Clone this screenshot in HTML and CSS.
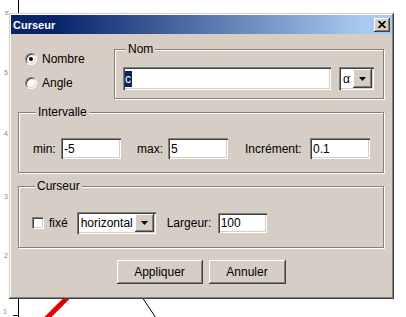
FILE: index.html
```html
<!DOCTYPE html>
<html lang="fr">
<head>
  <meta charset="UTF-8">
  <title>Curseur</title>
  <meta name="viewport" content="width=device-width, initial-scale=1.0">
  <link rel="stylesheet" href="styles.css">
</head>
<body>
  <!-- graphique derriere la fenetre -->
  <svg class="canvas" width="406" height="317" viewBox="0 0 406 317">
    <line x1="18.5" y1="0" x2="18.5" y2="317" stroke="#000" stroke-width="1"/>
    <line x1="13" y1="315.5" x2="18" y2="315.5" stroke="#000" stroke-width="1"/>
    <text x="3" y="314" class="tick">1</text>
    <text x="4" y="258" class="tick">2</text>
    <text x="4" y="199" class="tick">3</text>
    <text x="4" y="136" class="tick">4</text>
    <text x="4" y="75" class="tick">5</text>
    <text x="5" y="15" class="tick">e</text>
    <line x1="46" y1="319" x2="70" y2="295" stroke="#e00000" stroke-width="5"/>
    <line x1="142" y1="297" x2="156" y2="318" stroke="#000" stroke-width="1"/>
  </svg>

  <div class="window">
    <div class="titlebar">
      <span class="title">Curseur</span>
      <button class="close" type="button">
        <svg width="8" height="7" viewBox="0 0 8 7"><path d="M0.5 0 L7.5 7 M7.5 0 L0.5 7" stroke="#000" stroke-width="1.7"/></svg>
      </button>
    </div>

    <div class="content">
      <div class="top-row">
        <div class="kind">
          <label class="choice"><span class="radio checked"></span>Nombre</label>
          <label class="choice"><span class="radio"></span>Angle</label>
        </div>
        <fieldset class="group group-nom">
          <legend>Nom</legend>
          <div class="nom-row">
            <div class="field name-field"><span class="sel">c</span></div>
            <div class="combo combo-alpha">
              <span class="combo-value">α</span>
              <span class="combo-btn"><svg width="7" height="4" viewBox="0 0 7 4"><path d="M0 0 H7 L3.5 4 Z" fill="#000"/></svg></span>
            </div>
          </div>
        </fieldset>
      </div>

      <fieldset class="group group-interval">
        <legend>Intervalle</legend>
        <div class="row">
          <span class="lbl lbl-min">min:</span>
          <div class="field num">-5</div>
          <span class="lbl lbl-max">max:</span>
          <div class="field num">5</div>
          <span class="lbl lbl-inc">Incrément:</span>
          <div class="field num">0.1</div>
        </div>
      </fieldset>

      <fieldset class="group group-slider">
        <legend>Curseur</legend>
        <div class="row">
          <span class="check"></span>
          <span class="lbl lbl-fix">fixé</span>
          <div class="combo combo-dir">
            <span class="combo-value">horizontal</span>
            <span class="combo-btn"><svg width="7" height="4" viewBox="0 0 7 4"><path d="M0 0 H7 L3.5 4 Z" fill="#000"/></svg></span>
          </div>
          <span class="lbl lbl-width">Largeur:</span>
          <div class="field width-field">100</div>
        </div>
      </fieldset>

      <div class="buttons">
        <button type="button" class="btn btn-apply">Appliquer</button>
        <button type="button" class="btn btn-cancel">Annuler</button>
      </div>
    </div>
  </div>
</body>
</html>
```

FILE: styles.css
```css
body {
  margin: 0;
  width: 406px;
  height: 317px;
  overflow: hidden;
  position: relative;
  background: #fff;
  font-family: "Liberation Sans", Arial, sans-serif;
  font-size: 12px;
  color: #000;
}
.canvas {
  position: absolute;
  left: 0;
  top: 0;
}
.tick {
  font-size: 7px;
  fill: #888;
}

/* fond gris beige de la fenetre */
.window,
.group legend,
.btn,
.combo-btn,
.close {
  background: #d6cdc5;
}

.window {
  position: absolute;
  left: 9px;
  top: 13px;
  width: 385px;
  height: 286px;
  box-sizing: border-box;
  padding: 2px;
  box-shadow: inset -1px -1px #404040, inset 1px 1px #d4d0c8, inset -2px -2px #808080, inset 2px 2px #fff;
}
.titlebar {
  height: 19px;
  display: flex;
  align-items: center;
  justify-content: space-between;
  padding: 0 2px 0 2px;
  background: linear-gradient(90deg, #0a246a 12%, #a6caf0 92%);
}
.title {
  color: #fff;
  font-weight: bold;
  font-size: 11px;
}
.close {
  width: 16px;
  height: 14px;
  padding: 0;
  border: none;
  display: flex;
  align-items: center;
  justify-content: center;
  box-shadow: inset -1px -1px #404040, inset 1px 1px #fff, inset -2px -2px #808080;
}

.content {
  padding: 8px 8px 0 7px;
}
.top-row {
  display: flex;
}
.kind {
  width: 96px;
  padding: 5px 0 0 7px;
  box-sizing: border-box;
}
.choice {
  height: 24px;
  display: flex;
  align-items: center;
}
.radio {
  width: 12px;
  height: 12px;
  box-sizing: border-box;
  border-radius: 50%;
  background: #fff;
  border: 1px solid;
  border-color: #808080 #fff #fff #808080;
  box-shadow: inset 1px 1px #404040, inset -1px -1px #d4d0c8;
  margin-right: 5px;
  position: relative;
}
.radio.checked::after {
  content: "";
  position: absolute;
  left: 3px;
  top: 3px;
  width: 4px;
  height: 4px;
  border-radius: 50%;
  background: #000;
}

.group {
  margin: 0;
  border: 1px solid #808080;
  box-shadow: 1px 1px 0 #fff, inset 1px 1px 0 #fff;
  min-width: 0;
}
.group legend {
  padding: 0 2px;
  margin-left: 3px;
  line-height: 14px;
}
.group-nom {
  flex: 1;
  padding: 11px 9px 8px 8px;
}
.group-interval {
  margin-top: 6px;
  padding: 19px 8px 13px 14px;
}
.group-slider {
  margin-top: 6px;
  padding: 19px 8px 13px 13px;
}

.nom-row,
.row {
  display: flex;
  align-items: center;
}
.field {
  background: #fff;
  box-sizing: border-box;
  box-shadow: inset 1px 1px #808080, inset 2px 2px #404040, inset -1px -1px #fff, inset -2px -2px #d4d0c8;
  padding-left: 3px;
  display: flex;
  align-items: center;
}
.name-field {
  flex: 1;
  height: 23px;
  padding-left: 2px;
}
.sel {
  background: #0a246a;
  color: #fff;
  line-height: 16px;
  padding: 0 1px 0 0;
}
.num {
  width: 60px;
  height: 21px;
}
.lbl-min {
  width: 28px;
}
.lbl-max {
  width: 31px;
  margin-left: 16px;
}
.lbl-inc {
  width: 65px;
  margin-left: 17px;
}

.combo {
  display: flex;
  background: #fff;
  box-sizing: border-box;
  padding: 2px;
  box-shadow: inset 1px 1px #808080, inset 2px 2px #404040, inset -1px -1px #fff, inset -2px -2px #d4d0c8;
}
.combo-value {
  flex: 1;
  display: flex;
  align-items: center;
  padding-left: 2px;
}
.combo-btn {
  width: 19px;
  display: flex;
  align-items: center;
  justify-content: center;
  box-shadow: inset -1px -1px #404040, inset 1px 1px #fff, inset -2px -2px #808080;
}
.combo-alpha {
  width: 35px;
  height: 23px;
  margin-left: 8px;
}
.combo-dir {
  width: 79px;
  height: 22px;
  margin-left: 9px;
}

.check {
  width: 12px;
  height: 12px;
  box-sizing: border-box;
  background: #fff;
  border: 1px solid;
  border-color: #808080 #fff #fff #808080;
  box-shadow: inset 1px 1px #404040, inset -1px -1px #d4d0c8;
  margin-right: 5px;
}
.lbl-width {
  margin-left: 11px;
  width: 51px;
}
.width-field {
  width: 49px;
  height: 20px;
}

.buttons {
  display: flex;
  justify-content: center;
  gap: 6px;
  margin-top: 12px;
}
.btn {
  height: 24px;
  padding: 0;
  border: none;
  font: inherit;
  color: #000;
  box-shadow: inset -1px -1px #404040, inset 1px 1px #fff, inset -2px -2px #808080;
}
.btn-apply {
  width: 86px;
}
.btn-cancel {
  width: 77px;
}
```
